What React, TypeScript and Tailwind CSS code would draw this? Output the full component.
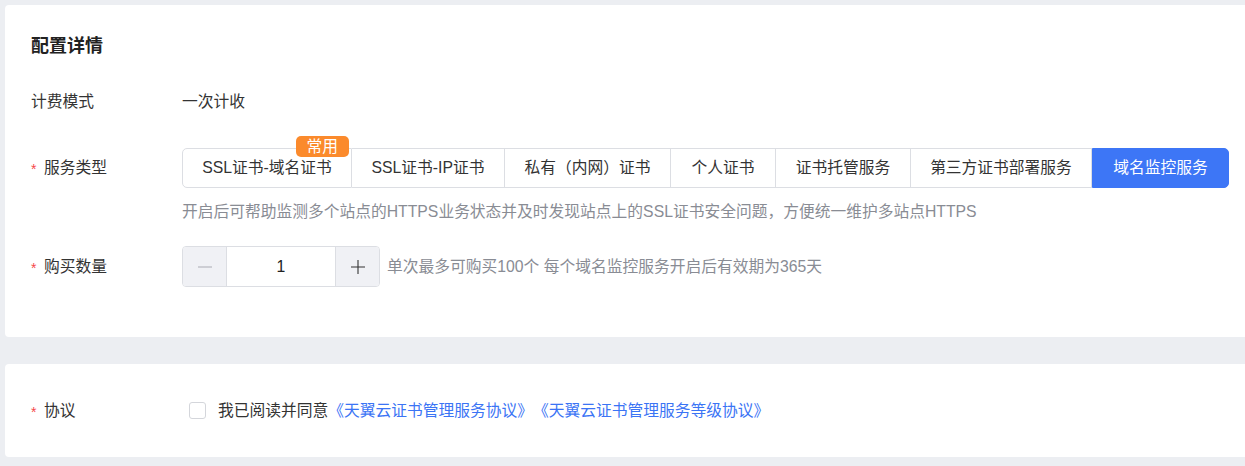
const font = { fontFamily: '"Liberation Sans", "Noto Sans CJK SC", sans-serif' }

const services = [
    { name: 'SSL证书-域名证书', w: 'w-[170px]', badge: true },
    { name: 'SSL证书-IP证书', w: 'w-[153px]' },
    { name: '私有（内网）证书', w: 'w-[166px]' },
    { name: '个人证书', w: 'w-[105px]' },
    { name: '证书托管服务', w: 'w-[135px]' },
    { name: '第三方证书部署服务', w: 'w-[181px]' },
    { name: '域名监控服务', w: 'w-[137px]', active: true },
]

const Label = ({ text, required }: { text: string, required?: boolean }) => (
    <div className="w-[151px] shrink-0 flex items-center text-[15.75px] text-[#333]">
        {required && <span className="text-[#f5484a] w-[13px] text-[14px] leading-none pt-[2px]">*</span>}
        <span>{text}</span>
    </div>
)

const App = () => {
    return (
        <div className="w-[1245px] h-[466px] bg-[#eceef2] pt-[5px] pl-[5px] overflow-hidden" style={font}>
            <div className="bg-white rounded-l-[4px] h-[332px] pl-[26px] pt-[28px]">
                <h2 className="text-[18px] leading-[26px] font-bold text-[#222]">配置详情</h2>

                <div className="flex items-center h-[32px] mt-[27px]">
                    <Label text="计费模式" />
                    <span className="text-[15.75px] text-[#333]">一次计收</span>
                </div>

                <div className="flex items-center h-[40px] mt-[30px]">
                    <Label text="服务类型" required />
                    <div className="flex">
                        {services.map((s, i) => (
                            <div
                                key={s.name}
                                className={`relative h-[40px] flex items-center justify-center text-[15.75px] ${s.w} ${
                                    s.active
                                        ? 'bg-[#3d76f6] text-white border border-[#3d76f6] rounded-r-[5px]'
                                        : 'bg-white text-[#333] border-y border-r border-[#dcdee3]'
                                } ${i === 0 ? 'border-l rounded-l-[5px]' : ''}`}
                            >
                                {s.badge && (
                                    <span className="absolute -top-[13px] right-[2px] h-[21px] px-[11px] flex items-center rounded-[5px] bg-[#fb8a2c] text-white text-[15.75px] leading-none">
                                        常用
                                    </span>
                                )}
                                {s.name}
                            </div>
                        ))}
                    </div>
                </div>

                <p className="ml-[151px] mt-[13px] text-[15.75px] leading-[22px] text-[#898c94]">
                    开启后可帮助监测多个站点的HTTPS业务状态并及时发现站点上的SSL证书安全问题，方便统一维护多站点HTTPS
                </p>

                <div className="flex items-center h-[41px] mt-[23px]">
                    <Label text="购买数量" required />
                    <div className="flex h-[41px] border border-[#dcdee3] rounded-[4px] overflow-hidden">
                        <button className="w-[43px] bg-[#f0f1f5] flex items-center justify-center text-[#a9acb3]">
                            <svg width="16" height="16" viewBox="0 0 16 16"><path d="M1 8h14" stroke="currentColor" strokeWidth="1.1" /></svg>
                        </button>
                        <div className="w-[110px] bg-white border-x border-[#dcdee3] flex items-center justify-center text-[15.75px] text-[#222]">1</div>
                        <button className="w-[43px] bg-[#f0f1f5] flex items-center justify-center text-[#333]">
                            <svg width="16" height="16" viewBox="0 0 16 16"><path d="M8 1v14M1 8h14" stroke="currentColor" strokeWidth="1.1" /></svg>
                        </button>
                    </div>
                    <span className="ml-[7px] text-[15.75px] text-[#898c94]">单次最多可购买100个 每个域名监控服务开启后有效期为365天</span>
                </div>
            </div>

            <div className="bg-white rounded-l-[4px] h-[93px] mt-[27px] pl-[26px] flex items-center">
                <Label text="协议" required />
                <div className="flex items-center ml-[7px]">
                    <span className="w-[17px] h-[17px] border border-[#d4d6db] rounded-[3px] bg-white" />
                    <span className="ml-[12px] text-[15.75px] text-[#333]">我已阅读并同意</span>
                    <a className="text-[15.75px] text-[#3b74f5]">《天翼云证书管理服务协议》</a>
                    <a className="text-[15.75px] text-[#3b74f5]">《天翼云证书管理服务等级协议》</a>
                </div>
            </div>
        </div>
    )
}

export default App
